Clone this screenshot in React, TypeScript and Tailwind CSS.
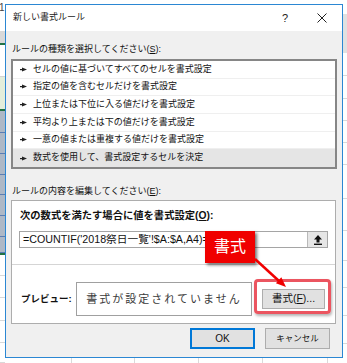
import type { ReactNode } from "react"

const rules = [
  "セルの値に基づいてすべてのセルを書式設定",
  "指定の値を含むセルだけを書式設定",
  "上位または下位に入る値だけを書式設定",
  "平均より上または下の値だけを書式設定",
  "一意の値または重複する値だけを書式設定",
  "数式を使用して、書式設定するセルを決定",
]

function U({ children }: { children: ReactNode }) {
  return <span className="underline underline-offset-[1px]">{children}</span>
}

function RuleArrow() {
  return (
    <svg width="7" height="5" viewBox="0 0 7 5" className="shrink-0">
      <rect x="0" y="2" width="3" height="1.2" fill="#222" />
      <polygon points="2,0.4 7,2.6 2,4.6" fill="#222" />
    </svg>
  )
}

function LeftStrip() {
  return (
    <div className="flex w-[5px] shrink-0 flex-col">
      <div className="h-[31px] overflow-hidden text-[10px] leading-[14px] text-[#444]">
        <span className="-ml-[1px] block pt-[1px]">1</span>
      </div>
      <div className="h-[12px] bg-[#d9d9d9]" />
      <div className="h-[2px] bg-[#217346]" />
      <div className="h-[32px] border-b border-[#d4d4d4] bg-white" />
      <div className="h-[32px] bg-[#e3eedb]" />
      <div className="h-[2px] bg-[#217346]" />
      <div className="flex h-[142px] flex-col bg-[#aeb8c6]">
        {[22, 21, 21, 20, 21, 21, 16].map((h, i) => (
          <div key={i} className="border-b border-[#5b7db3]" style={{ height: h }} />
        ))}
      </div>
      <div className="h-[2px] bg-[#217346]" />
      <div className="flex flex-1 flex-col">
        {[21, 22, 23, 22, 20].map((h, i) => (
          <div key={i} className="border-b border-[#d9d9d9]" style={{ height: h }} />
        ))}
      </div>
    </div>
  )
}

function RightStrip() {
  return (
    <div className="flex w-[4px] shrink-0 flex-col">
      <div className="h-[14px]" />
      <div className="h-[39px] bg-[#e1e1e1]" />
      {[23, 23, 22, 22, 22, 34, 32, 30, 27, 28, 28].map((h, i) => (
        <div key={i} className="border-b border-[#d9d9d9]" style={{ height: h }} />
      ))}
    </div>
  )
}

function BottomStrip() {
  return (
    <div className="flex flex-1">
      {[67, 63, 64, 64, 65].map((w, i) => (
        <div key={i} className="border-r border-[#dadada]" style={{ width: w }} />
      ))}
    </div>
  )
}

function Dialog() {
  return (
    <div className="flex h-[354px] flex-col border border-[#2b87d3] bg-white">
      {/* title bar */}
      <div className="flex h-[26px] shrink-0 items-center pl-[7px] text-[9px] text-[#1a1a1a]">
        <span>新しい書式ルール</span>
        <span className="ml-auto w-[12px] text-center text-[11px]">?</span>
        <svg width="10" height="10" viewBox="0 0 10 10" className="ml-[26px] mr-[15px]">
          <path d="M0.5 0.5 L9.5 9.5 M9.5 0.5 L0.5 9.5" stroke="#222" strokeWidth="1" />
        </svg>
      </div>

      <div className="flex flex-1 flex-col bg-[#f0f0f0] px-[5px]">
        <div className="mt-[12px] h-[12px] pl-[1px] text-[9px] leading-[12px]">
          ルールの種類を選択してください(<U>S</U>):
        </div>

        <div className="mt-[4px] flex h-[110px] flex-col border-2 border-[#868686] bg-white">
          {rules.map((r, i) => (
            <div
              key={r}
              className={
                i === rules.length - 1
                  ? "flex h-[17.67px] items-center gap-[6px] bg-[#e5e5e5] pl-[7px] text-[9px]"
                  : "flex h-[17.67px] items-center gap-[6px] border-b border-[#efefef] pl-[7px] text-[9px]"
              }
            >
              <RuleArrow />
              <span>{r}</span>
            </div>
          ))}
        </div>

        <div className="mt-[16px] h-[12px] pl-[1px] text-[9px] leading-[12px]">
          ルールの内容を編集してください(<U>E</U>):
        </div>

        <div className="mt-[3px] mr-[1px] flex h-[124px] flex-col border border-[#adadad] bg-white">
          <div className="h-[64px] border-b border-[#d5d5d5] px-[7px] pt-[7px]">
            <div className="h-[15px] pl-[1px] text-[10.3px] font-bold leading-[15px]">
              次の数式を満たす場合に値を書式設定(<U>O</U>):
            </div>
            <div className="mt-[8px] flex h-[17px] border border-[#a5a5a5] bg-white">
              <div className="flex-1 overflow-hidden whitespace-nowrap pl-[3px] text-[10.7px] leading-[15px]">
                =COUNTIF('2018祭日一覧'!$A:$A,A4)=1
              </div>
              <div className="flex w-[20px] items-center justify-center border-l border-[#b9b9b9] bg-[#e6e6e6]">
                <svg width="8" height="10" viewBox="0 0 8 10">
                  <polygon points="4,0 8,4.5 5.5,4.5 5.5,7.5 2.5,7.5 2.5,4.5 0,4.5" fill="#111" />
                  <rect x="0" y="8.6" width="8" height="1.4" fill="#111" />
                </svg>
              </div>
            </div>
          </div>
          <div className="flex items-center pl-[9px] pt-[17px]">
            <div className="w-[55px] text-[9.5px] font-bold">プレビュー:</div>
            <div className="flex h-[34px] w-[176px] items-center justify-center border border-[#a0a0a0] bg-white text-[11px] tracking-[2px] text-[#3a3a3a]">
              書式が設定されていません
            </div>
            <div className="ml-[10px] flex h-[20px] w-[63px] items-center justify-center border border-[#adadad] bg-[#e1e1e1] text-[10.5px]">
              書式(<U>F</U>)...
            </div>
          </div>
        </div>

        <div className="mt-[4px] flex justify-end gap-[10px] pr-[7px]">
          <div className="flex h-[21px] w-[65px] items-center justify-center border-2 border-[#0078d7] bg-[#e1e1e1] text-[10px]">
            OK
          </div>
          <div className="flex h-[21px] w-[65px] items-center justify-center border border-[#adadad] bg-[#e1e1e1] text-[8.5px]">
            キャンセル
          </div>
        </div>
      </div>
    </div>
  )
}

export default function App() {
  return (
    <div className="relative flex h-[363px] w-[347px] overflow-hidden bg-white font-['Liberation_Sans','Noto_Sans_CJK_JP',sans-serif] text-[#111]">
      <LeftStrip />
      <div className="flex w-[338px] shrink-0 flex-col">
        <div className="h-[4px] shrink-0" />
        <Dialog />
        <BottomStrip />
      </div>
      <RightStrip />

      {/* highlight around the format button */}
      <div className="absolute left-[254px] top-[279px] h-[35px] w-[77px] rounded-[4px] border-[3px] border-[#eb5560] shadow-[1px_2px_3px_rgba(0,0,0,0.3)]" />

      {/* red callout */}
      <div className="absolute left-[205px] top-[231px] flex h-[32px] w-[50px] items-center justify-center bg-[#f00000] text-[16px] text-white shadow-[2px_2px_3px_rgba(0,0,0,0.55)]">
        書式
      </div>
      <svg className="absolute left-[250px] top-[255px]" width="45" height="40" viewBox="0 0 45 40">
        <line x1="5" y1="4" x2="29" y2="26" stroke="#f00000" strokeWidth="2.5" />
        <polygon points="36,32 25.9,28.3 31.3,22.3" fill="#f00000" />
      </svg>
    </div>
  )
}
